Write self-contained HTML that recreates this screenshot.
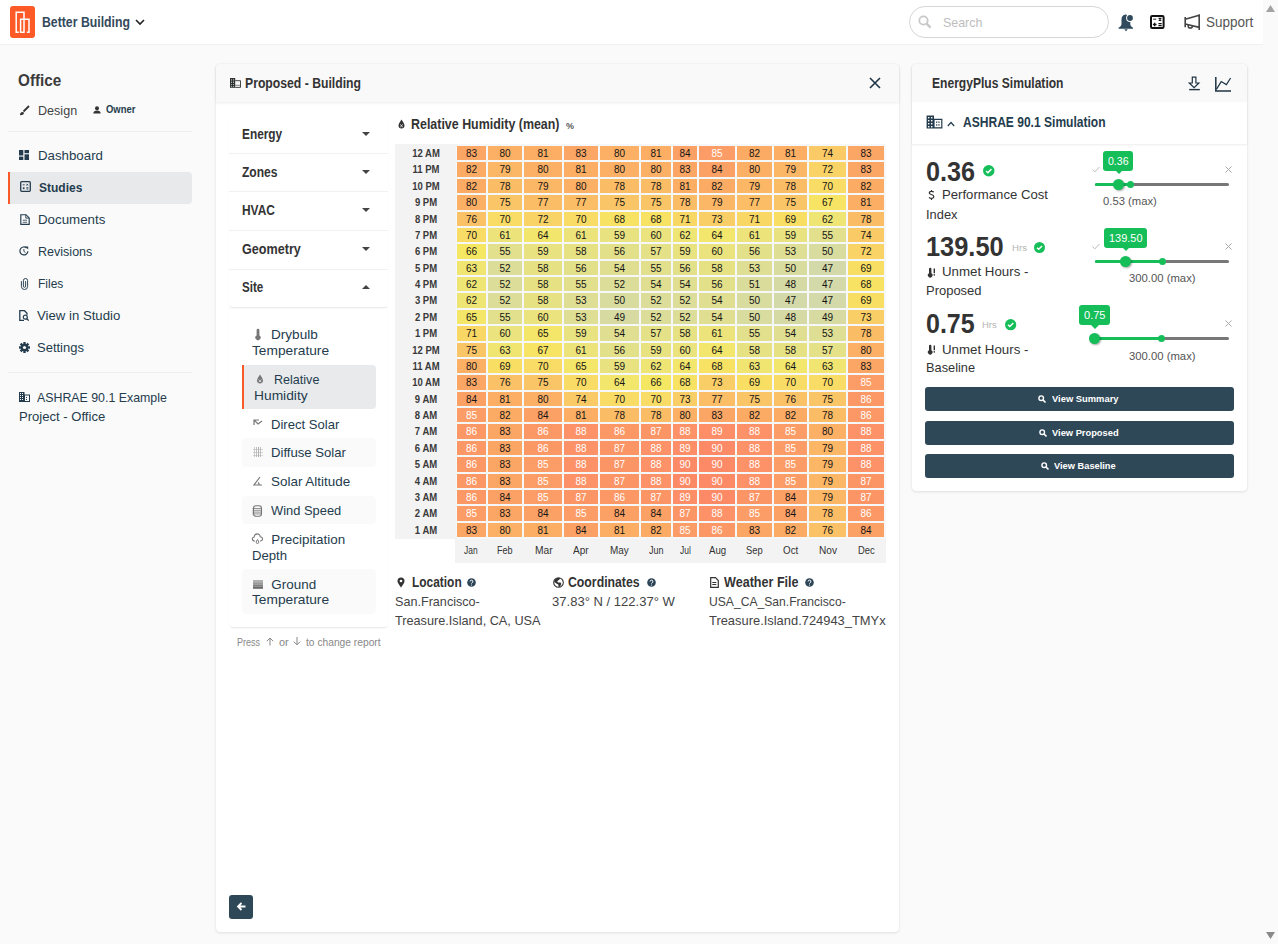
<!DOCTYPE html>
<html><head><meta charset="utf-8">
<style>
*{box-sizing:border-box;margin:0;padding:0}
html,body{width:1278px;height:944px;overflow:hidden}
body{font-family:"Liberation Sans",sans-serif;background:#fafafa;position:relative;color:#2d4252}
.t{position:absolute;white-space:nowrap;line-height:1}
.topbar{position:absolute;left:0;top:0;width:1263px;height:44px;background:#fff;box-shadow:0 1px 1px rgba(0,0,0,0.03)}
.scroll{position:absolute;left:1263px;top:0;width:15px;height:944px;background:#fafafa}
.sep{position:absolute;height:1px;background:#efefef}
.card{position:absolute;background:#fff;border-radius:4px;box-shadow:0 1px 3px rgba(0,0,0,0.10),0 0 1px rgba(0,0,0,0.10)}
.chead{position:absolute;left:0;top:0;right:0;height:38px;background:#f9f9f9;border-radius:4px 4px 0 0;box-shadow:0 1px 3px rgba(0,0,0,0.08)}
svg{position:absolute;overflow:visible}
.nav{font-size:13px;color:#2d4556}
.acc{position:absolute;background:#fff;border-radius:4px;box-shadow:0 2px 2px -1px rgba(0,0,0,0.10),0 0 1px rgba(0,0,0,0.05)}
.accsep{position:absolute;left:229px;width:159px;height:1px;background:#f1f1f1}
.hl{position:absolute;left:397px;width:58px;height:14.375px;line-height:15.4px;text-align:center;font-size:10px;font-weight:bold;color:#3a3a3a;white-space:nowrap;transform:scaleX(0.95)}
.hc{position:absolute;height:14.375px;line-height:15.2px;text-align:center;font-size:10px}
.hm{position:absolute;top:539px;height:24px;line-height:24px;text-align:center;font-size:10.5px;color:#333}
</style></head><body>

<div class="topbar"></div>
<div style="position:absolute;left:10px;top:6px;width:25px;height:32px;background:#fd5a27;border-radius:3px"></div>
<svg style="left:10px;top:6px" width="25" height="32" viewBox="0 0 25 32"><path d="M8.8 26.2H6.2V6.2H14V26.2H10.6V13.3H19V26.2H16.8" fill="none" stroke="#fff" stroke-width="1.5"/></svg>
<div class="t" style="left:42.00px;top:15.43px;font-size:14.49px;font-weight:bold;color:#34495b;transform:scaleX(0.8474);transform-origin:0 0;">Better Building</div>
<svg style="left:135px;top:19px" width="10" height="7" viewBox="0 0 10 7"><path d="M1 1l4 4 4-4" fill="none" stroke="#222" stroke-width="1.6"/></svg>
<div style="position:absolute;left:909px;top:6px;width:200px;height:32px;border:1px solid #d6d6d6;border-radius:16px;background:#fff"></div>
<svg style="left:918px;top:15px" width="14" height="14" viewBox="0 0 14 14"><circle cx="5.5" cy="5.5" r="4.2" fill="none" stroke="#c8c8c8" stroke-width="1.8"/><path d="M8.6 8.6l4 4" stroke="#c8c8c8" stroke-width="2.2"/></svg>
<div class="t" style="left:942.60px;top:16.31px;font-size:13.45px;color:#bdbdbd;transform:scaleX(0.9247);transform-origin:0 0;">Search</div>
<svg style="left:1117.5px;top:13.5px" width="16" height="18" viewBox="0 0 16 18"><path d="M8 .6C5.2 .6 3.5 2.8 3.5 5.8V10.2C3.5 11.8 2 12.9 .6 13.7V14.7H15V13.7C13.6 12.9 12.3 11.8 12.3 10.2V5.8C12.3 4.8 12 3.7 11.4 2.8" fill="#2e4a5c"/><circle cx="12" cy="4" r="3.9" fill="#fff"/><circle cx="12" cy="4" r="2.9" fill="#2e4a5c"/><path d="M6.2 15.3H9.8L8 17.2z" fill="#2e4a5c"/></svg>
<svg style="left:1150px;top:15px" width="15" height="14" viewBox="0 0 15 14"><rect x="1" y="1" width="12.6" height="12" rx="1.2" fill="none" stroke="#111" stroke-width="2"/><path d="M3.2 4.2h3" stroke="#555" stroke-width="1.3"/><path d="M8.7 2.9l2.6 2.6M11.3 2.9L8.7 5.5" stroke="#111" stroke-width="1.3"/><path d="M2.9 9.5h3.6M4.7 7.7v3.6M8.4 8.6h3.3M8.4 10.6h3.3" stroke="#111" stroke-width="1.3"/></svg>
<svg style="left:1184px;top:14px" width="17" height="17" viewBox="0 0 17 17"><path d="M1.2 3v10.2M1.2 5.3L15.2 1.2M1.2 10L15.2 13.4M15.2 .3v15.6" fill="none" stroke="#444" stroke-width="1.6"/><path d="M4.2 11v.9a2.1 2.1 0 0 0 4.2 0v-.1" fill="none" stroke="#444" stroke-width="1.5"/></svg>
<div class="t" style="left:1205.90px;top:15.43px;font-size:14.49px;color:#555;transform:scaleX(0.9302);transform-origin:0 0;">Support</div>
<div class="scroll"></div>
<svg style="left:1263px;top:0" width="15" height="15" viewBox="0 0 15 15"><path d="M3 12L7.5 5 12 12z" fill="#a3a3a3"/></svg>
<svg style="left:1263px;top:929px" width="15" height="15" viewBox="0 0 15 15"><path d="M3 3l4.5 7L12 3z" fill="#8a8a8a"/></svg>
<div class="t" style="left:17.70px;top:72.04px;font-size:17.08px;font-weight:bold;color:#3b3b3b;transform:scaleX(0.8945);transform-origin:0 0;">Office</div>
<svg style="left:19px;top:105px" width="11" height="11" viewBox="0 0 11 11"><path d="M10 1L4.5 6.5" stroke="#333" stroke-width="1.8"/><path d="M1 10.2c0-2 1-3.2 2.5-3.2 1 0 1.6.7 1.4 1.6C4.6 9.8 3 10.3 1 10.2z" fill="#333"/></svg>
<div class="t" style="left:37.50px;top:104.31px;font-size:13.45px;color:#444;transform:scaleX(0.9362);transform-origin:0 0;">Design</div>
<svg style="left:93px;top:106px" width="8" height="8" viewBox="0 0 8 8"><circle cx="4" cy="2.2" r="2" fill="#333"/><path d="M0.3 7.6c0-2 1.6-3 3.7-3s3.7 1 3.7 3z" fill="#333"/></svg>
<div class="t" style="left:105.60px;top:105.14px;font-size:10.35px;font-weight:bold;color:#243c4d;transform:scaleX(0.9128);transform-origin:0 0;">Owner</div>
<div class="sep" style="left:8px;top:131px;width:184px"></div>
<svg style="left:19px;top:150px" width="10" height="10" viewBox="0 0 10 10"><rect x="0" y="0" width="4.3" height="5.5" fill="#243c4d"/><rect x="5.5" y="0" width="4.5" height="3.2" fill="#243c4d"/><rect x="0" y="6.6" width="4.3" height="3.4" fill="#243c4d"/><rect x="5.5" y="4.3" width="4.5" height="5.7" fill="#243c4d"/></svg>
<div class="t" style="left:37.50px;top:149.01px;font-size:13.45px;color:#243c4d;transform:scaleX(0.9879);transform-origin:0 0;">Dashboard</div>
<div style="position:absolute;left:8px;top:172px;width:184px;height:32px;background:#e8e9eb;border-radius:0 4px 4px 0;border-left:2px solid #fa5a28"></div>
<svg style="left:20px;top:181px" width="11" height="11" viewBox="0 0 11 11"><rect x="0.7" y="0.7" width="9.6" height="9.6" rx="1" fill="none" stroke="#243c4d" stroke-width="1.3"/><path d="M2.7 3.8h2 M6.5 2.9l1.6 1.6 M8.1 2.9L6.5 4.5 M2.7 7.2h2 M3.7 6.2v2 M6.4 6.7h2 M6.4 8h2" stroke="#243c4d" stroke-width="0.9"/></svg>
<div class="t" style="left:38.80px;top:181.31px;font-size:13.45px;font-weight:bold;color:#243c4d;transform:scaleX(0.8933);transform-origin:0 0;">Studies</div>
<svg style="left:19.5px;top:213.5px" width="10" height="11" viewBox="0 0 10 11"><path d="M.8 .7h5.2l3.2 3.2v6.4H.8z" fill="none" stroke="#243c4d" stroke-width="1.15"/><path d="M5.8 .9v3.2h3.2" fill="none" stroke="#243c4d" stroke-width="0.9"/><path d="M2.8 6.2h4.2M2.8 8.3h4.2" stroke="#243c4d" stroke-width="0.8"/></svg>
<div class="t" style="left:37.70px;top:213.11px;font-size:13.45px;color:#243c4d;transform:scaleX(0.9907);transform-origin:0 0;">Documents</div>
<svg style="left:19px;top:246px" width="10" height="10" viewBox="0 0 10 10"><path d="M8.9 5.2A4 4 0 1 1 7.6 2" fill="none" stroke="#243c4d" stroke-width="1.2"/><path d="M6.2 .6h3v3z" fill="#243c4d"/><path d="M4.9 3v2.4l1.6 1.1" fill="none" stroke="#243c4d" stroke-width="0.9"/></svg>
<div class="t" style="left:37.70px;top:244.91px;font-size:13.45px;color:#243c4d;transform:scaleX(0.9330);transform-origin:0 0;">Revisions</div>
<svg style="left:21px;top:278px" width="7" height="11" viewBox="0 0 7 11"><path d="M4.6 3.2v5a1.1 1.1 0 0 1-2.2 0V2.6a2.1 2.1 0 0 1 4.2 0v5.8a3.1 3.1 0 0 1-6.2 0V3.2" fill="none" stroke="#243c4d" stroke-width="0.95"/></svg>
<div class="t" style="left:37.70px;top:277.01px;font-size:13.45px;color:#243c4d;transform:scaleX(0.8911);transform-origin:0 0;">Files</div>
<svg style="left:19px;top:310px" width="11" height="11" viewBox="0 0 11 11"><path d="M5 10.3H.8V.7h4.7l2.5 2.5v1.5" fill="none" stroke="#243c4d" stroke-width="1.3"/><circle cx="6.3" cy="7.2" r="2" fill="none" stroke="#243c4d" stroke-width="1.2"/><path d="M7.8 8.7l1.9 1.9" stroke="#243c4d" stroke-width="1.3"/></svg>
<div class="t" style="left:37.20px;top:309.01px;font-size:13.45px;color:#243c4d;transform:scaleX(0.9801);transform-origin:0 0;">View in Studio</div>
<svg style="left:19px;top:342px" width="11" height="11" viewBox="0 0 11 11"><g fill="#243c4d"><circle cx="5.5" cy="5.5" r="3.7"/><rect x="4.3" y="0" width="2.4" height="11"/><rect x="0" y="4.3" width="11" height="2.4"/><rect x="4.3" y="0" width="2.4" height="11" transform="rotate(45 5.5 5.5)"/><rect x="4.3" y="0" width="2.4" height="11" transform="rotate(-45 5.5 5.5)"/></g><circle cx="5.5" cy="5.5" r="1.6" fill="#fafafa"/></svg>
<div class="t" style="left:37.20px;top:341.11px;font-size:13.45px;color:#243c4d;transform:scaleX(0.9672);transform-origin:0 0;">Settings</div>
<div class="sep" style="left:8px;top:372px;width:184px"></div>
<svg style="left:19px;top:392px" width="11" height="10" viewBox="0 0 11 10"><path d="M0 0h5.5v2.5H11V10H0z" fill="#243c4d"/><g fill="#fafafa"><rect x="1" y="1" width="1" height="1"/><rect x="3" y="1" width="1" height="1"/><rect x="1" y="3" width="1" height="1"/><rect x="3" y="3" width="1" height="1"/><rect x="1" y="5" width="1" height="1"/><rect x="3" y="5" width="1" height="1"/><rect x="1" y="7" width="1" height="1"/><rect x="3" y="7" width="1" height="1"/><rect x="6" y="3.5" width="4" height="5.5"/></g><g fill="#243c4d"><rect x="7" y="5" width="1" height="1"/><rect x="7" y="7" width="1" height="1"/></g></svg>
<div class="t" style="left:37.20px;top:391.31px;font-size:13.45px;color:#243c4d;transform:scaleX(0.9194);transform-origin:0 0;">ASHRAE 90.1 Example</div>
<div class="t" style="left:18.50px;top:410.01px;font-size:13.45px;color:#243c4d;transform:scaleX(0.9729);transform-origin:0 0;">Project - Office</div>
<div class="card" style="left:216px;top:64px;width:683px;height:868px"><div class="chead"></div></div>
<svg style="left:229.8px;top:78px" width="11" height="10" viewBox="0 0 11 10"><rect x="0" y="0" width="5.2" height="9.8" fill="#333"/><g fill="#9fb8b0"><rect x="1" y="1.2" width="1" height="1.4"/><rect x="3" y="1.2" width="1" height="1.4"/><rect x="1" y="3.6" width="1" height="1.4"/><rect x="3" y="3.6" width="1" height="1.4"/><rect x="1" y="6" width="1" height="1"/><rect x="3" y="6" width="1" height="1"/><rect x="1" y="8" width="1" height="1"/><rect x="3" y="8" width="1" height="1"/></g><path d="M5.2 2.7H10.5V9.4H5.2" fill="none" stroke="#333" stroke-width="0.9"/><path d="M5.2 7.3h5" stroke="#333" stroke-width="0.6"/></svg>
<div class="t" style="left:245.00px;top:76.87px;font-size:13.97px;font-weight:bold;color:#333;transform:scaleX(0.8741);transform-origin:0 0;">Proposed - Building</div>
<svg style="left:869px;top:77px" width="12" height="12" viewBox="0 0 12 12"><path d="M1 1l10 10M11 1L1 11" stroke="#1f3445" stroke-width="1.6"/></svg>
<div class="acc" style="left:229px;top:307px;width:159px;height:320px"></div>
<div class="acc" style="left:229px;top:115px;width:159px;height:192px"></div>
<div class="t" style="left:242.00px;top:127.87px;font-size:13.97px;font-weight:bold;color:#333;transform:scaleX(0.8488);transform-origin:0 0;">Energy</div>
<svg style="left:362px;top:132px" width="8" height="4" viewBox="0 0 8 4"><path d="M0 0L4 4 8 0z" fill="#444"/></svg>
<div class="accsep" style="top:153px"></div>
<div class="t" style="left:242.00px;top:165.87px;font-size:13.97px;font-weight:bold;color:#333;transform:scaleX(0.8629);transform-origin:0 0;">Zones</div>
<svg style="left:362px;top:170px" width="8" height="4" viewBox="0 0 8 4"><path d="M0 0L4 4 8 0z" fill="#444"/></svg>
<div class="accsep" style="top:191px"></div>
<div class="t" style="left:242.00px;top:204.17px;font-size:13.97px;font-weight:bold;color:#333;transform:scaleX(0.8536);transform-origin:0 0;">HVAC</div>
<svg style="left:362px;top:208.3px" width="8" height="4" viewBox="0 0 8 4"><path d="M0 0L4 4 8 0z" fill="#444"/></svg>
<div class="accsep" style="top:230px"></div>
<div class="t" style="left:242.00px;top:242.57px;font-size:13.97px;font-weight:bold;color:#333;transform:scaleX(0.9017);transform-origin:0 0;">Geometry</div>
<svg style="left:362px;top:246.7px" width="8" height="4" viewBox="0 0 8 4"><path d="M0 0L4 4 8 0z" fill="#444"/></svg>
<div class="accsep" style="top:269px"></div>
<div class="t" style="left:242.00px;top:280.87px;font-size:13.97px;font-weight:bold;color:#333;transform:scaleX(0.8313);transform-origin:0 0;">Site</div>
<svg style="left:362px;top:285px" width="8" height="4" viewBox="0 0 8 4"><path d="M0 4L4 0 8 4z" fill="#444"/></svg>
<div style="position:absolute;left:242px;top:365px;width:134px;height:44px;background:#e9eaec;border-left:2px solid #fa5a28;border-radius:0 4px 4px 0;"></div>
<div style="position:absolute;left:242px;top:438px;width:134px;height:29px;background:#fafafa;border-radius:4px;"></div>
<div style="position:absolute;left:242px;top:496px;width:134px;height:28px;background:#fafafa;border-radius:4px;"></div>
<div style="position:absolute;left:242px;top:569px;width:134px;height:45px;background:#fafafa;border-radius:4px;"></div>
<div class="t" style="left:271.30px;top:328.21px;font-size:13.45px;color:#243c4d;transform:scaleX(1.0097);transform-origin:0 0;">Drybulb</div>
<div class="t" style="left:252.00px;top:344.01px;font-size:13.45px;color:#243c4d;transform:scaleX(1.0211);transform-origin:0 0;">Temperature</div>
<div class="t" style="left:273.80px;top:373.01px;font-size:13.45px;color:#243c4d;transform:scaleX(0.9343);transform-origin:0 0;">Relative</div>
<div class="t" style="left:254.10px;top:388.81px;font-size:13.45px;color:#243c4d;transform:scaleX(1.0264);transform-origin:0 0;">Humidity</div>
<div class="t" style="left:271.30px;top:417.71px;font-size:13.45px;color:#243c4d;transform:scaleX(0.9735);transform-origin:0 0;">Direct Solar</div>
<div class="t" style="left:271.30px;top:445.71px;font-size:13.45px;color:#243c4d;transform:scaleX(0.9771);transform-origin:0 0;">Diffuse Solar</div>
<div class="t" style="left:271.00px;top:475.11px;font-size:13.45px;color:#243c4d;">Solar Altitude</div>
<div class="t" style="left:271.00px;top:503.61px;font-size:13.45px;color:#243c4d;transform:scaleX(0.9594);transform-origin:0 0;">Wind Speed</div>
<div class="t" style="left:271.30px;top:533.31px;font-size:13.45px;color:#243c4d;">Precipitation</div>
<div class="t" style="left:252.00px;top:549.31px;font-size:13.45px;color:#243c4d;transform:scaleX(0.9781);transform-origin:0 0;">Depth</div>
<div class="t" style="left:271.30px;top:577.81px;font-size:13.45px;color:#243c4d;">Ground</div>
<div class="t" style="left:252.00px;top:592.91px;font-size:13.45px;color:#243c4d;transform:scaleX(1.0211);transform-origin:0 0;">Temperature</div>
<svg style="left:254px;top:329px" width="8" height="11" viewBox="0 0 8 11"><path d="M2.6 1.2a1.4 1.4 0 0 1 2.8 0v5.2a2.6 2.6 0 1 1-2.8 0z" fill="#777"/></svg>
<svg style="left:256px;top:374px" width="8" height="10" viewBox="0 0 8 10"><path d="M4 0.5C2.5 3 1 4.8 1 6.6a3 3 0 0 0 6 0C7 4.8 5.5 3 4 .5z" fill="#777"/><path d="M2.6 5.5l2.8 2.8M5.4 5.5L2.6 8.3" stroke="#e9eaec" stroke-width="0.8"/></svg>
<svg style="left:253px;top:419px" width="10" height="8" viewBox="0 0 10 8"><path d="M1 6V1h5M1 1l4 4 4-3" fill="none" stroke="#777" stroke-width="1.2"/></svg>
<svg style="left:253px;top:447px" width="10" height="10" viewBox="0 0 10 10"><g fill="#777" opacity="0.55"><rect x="1" y="0" width="1" height="10" opacity=".6"/><rect x="3" y="0" width="1" height="10" opacity=".8"/><rect x="5" y="0" width="1" height="10"/><rect x="7" y="0" width="1" height="10" opacity=".8"/><rect x="0" y="2" width="10" height="1" opacity=".5"/><rect x="0" y="5" width="10" height="1" opacity=".5"/><rect x="0" y="8" width="10" height="1" opacity=".5"/></g></svg>
<svg style="left:253px;top:476px" width="10" height="10" viewBox="0 0 10 10"><path d="M7 1L1 9h8M5 6.5a2.5 2.5 0 0 1 1 2.5" fill="none" stroke="#777" stroke-width="1.2"/></svg>
<svg style="left:252px;top:504.5px" width="11" height="12" viewBox="0 0 11 12"><rect x="1.5" y="0.8" width="8" height="10.4" rx="2.5" fill="none" stroke="#777" stroke-width="1.1"/><path d="M0.5 3.5h9M0.5 5.3h9M0.5 7.1h9M0.5 8.9h9" stroke="#777" stroke-width="0.8"/></svg>
<svg style="left:252px;top:534px" width="11" height="11" viewBox="0 0 11 11"><path d="M3 7H2.5a2 2 0 0 1-.3-4 3 3 0 0 1 6-.3 2 2 0 0 1 .3 4.3H8" fill="none" stroke="#777" stroke-width="1.1"/><path d="M5.5 5.5c-.8 1.3-1.3 2-1.3 2.7a1.3 1.3 0 0 0 2.6 0c0-.7-.5-1.4-1.3-2.7z" fill="none" stroke="#777" stroke-width="1"/></svg>
<svg style="left:253px;top:580px" width="10" height="9" viewBox="0 0 10 9"><rect x="0" y="0" width="10" height="2.2" fill="#b0b0b0"/><rect x="0" y="2.2" width="10" height="2.2" fill="#999"/><rect x="0" y="4.4" width="10" height="2.2" fill="#808080"/><rect x="0" y="6.6" width="10" height="2.2" fill="#6a6a6a"/></svg>
<div class="t" style="left:236.90px;top:636.50px;font-size:10.87px;color:#888;transform:scaleX(0.8314);transform-origin:0 0;">Press</div>
<div class="t" style="left:278.50px;top:636.50px;font-size:10.87px;color:#888;transform:scaleX(1.0141);transform-origin:0 0;">or</div>
<div class="t" style="left:305.90px;top:636.50px;font-size:10.87px;color:#888;transform:scaleX(0.9436);transform-origin:0 0;">to change report</div>
<svg style="left:265.5px;top:637px" width="8" height="9" viewBox="0 0 8 9"><path d="M4 8.5V1M.8 4.2L4 1l3.2 3.2" fill="none" stroke="#888" stroke-width="1"/></svg>
<svg style="left:293px;top:637px" width="8" height="9" viewBox="0 0 8 9"><path d="M4 0V7.8M.8 4.6L4 7.8l3.2-3.2" fill="none" stroke="#888" stroke-width="1"/></svg>
<svg style="left:398px;top:119px" width="7" height="10" viewBox="0 0 7 10"><path d="M3.5 0.5C2 3 .5 4.8.5 6.6a3 3 0 0 0 6 0C6.5 4.8 5 3 3.5.5z" fill="#333"/><path d="M2.2 5.5l2.6 2.6M4.8 5.5L2.2 8.1" stroke="#fff" stroke-width="0.8"/></svg>
<div class="t" style="left:411.40px;top:117.67px;font-size:13.97px;font-weight:bold;color:#333;transform:scaleX(0.8898);transform-origin:0 0;">Relative Humidity (mean)</div>
<div class="t" style="left:566.00px;top:121.18px;font-size:9.83px;font-weight:bold;color:#555;transform:scaleX(0.9155);transform-origin:0 0;">%</div>
<div style="position:absolute;left:395px;top:144px;width:491px;height:395px;background:#f6f7f9"></div>
<div style="position:absolute;left:395px;top:144px;width:61px;height:395px;background:#f3f3f3"></div>
<div style="position:absolute;left:455px;top:539px;width:431px;height:24px;background:#f3f3f3"></div>
<div class="hl" style="top:146.000px">12 AM</div>
<div class="hc" style="left:457px;top:146.000px;width:29px;background:#fba664;color:#151515">83</div>
<div class="hc" style="left:488px;top:146.000px;width:34px;background:#fbb065;color:#151515">80</div>
<div class="hc" style="left:524px;top:146.000px;width:38px;background:#fbae64;color:#151515">81</div>
<div class="hc" style="left:564px;top:146.000px;width:34px;background:#fba664;color:#151515">83</div>
<div class="hc" style="left:600px;top:146.000px;width:39px;background:#fbb065;color:#151515">80</div>
<div class="hc" style="left:641px;top:146.000px;width:30px;background:#fbae64;color:#151515">81</div>
<div class="hc" style="left:673px;top:146.000px;width:24px;background:#fca165;color:#151515">84</div>
<div class="hc" style="left:699px;top:146.000px;width:36px;background:#fc9c66;color:#fff">85</div>
<div class="hc" style="left:737px;top:146.000px;width:35px;background:#fbab63;color:#151515">82</div>
<div class="hc" style="left:774px;top:146.000px;width:33px;background:#fbae64;color:#151515">81</div>
<div class="hc" style="left:809px;top:146.000px;width:37px;background:#faca66;color:#151515">74</div>
<div class="hc" style="left:848px;top:146.000px;width:36px;background:#fba664;color:#151515">83</div>
<div class="hl" style="top:162.375px">11 PM</div>
<div class="hc" style="left:457px;top:162.375px;width:29px;background:#fbab63;color:#151515">82</div>
<div class="hc" style="left:488px;top:162.375px;width:34px;background:#fbb666;color:#151515">79</div>
<div class="hc" style="left:524px;top:162.375px;width:38px;background:#fbb065;color:#151515">80</div>
<div class="hc" style="left:564px;top:162.375px;width:34px;background:#fbae64;color:#151515">81</div>
<div class="hc" style="left:600px;top:162.375px;width:39px;background:#fbb065;color:#151515">80</div>
<div class="hc" style="left:641px;top:162.375px;width:30px;background:#fbb065;color:#151515">80</div>
<div class="hc" style="left:673px;top:162.375px;width:24px;background:#fba664;color:#151515">83</div>
<div class="hc" style="left:699px;top:162.375px;width:36px;background:#fca165;color:#151515">84</div>
<div class="hc" style="left:737px;top:162.375px;width:35px;background:#fbb065;color:#151515">80</div>
<div class="hc" style="left:774px;top:162.375px;width:33px;background:#fbb666;color:#151515">79</div>
<div class="hc" style="left:809px;top:162.375px;width:37px;background:#f9d365;color:#151515">72</div>
<div class="hc" style="left:848px;top:162.375px;width:36px;background:#fba664;color:#151515">83</div>
<div class="hl" style="top:178.750px">10 PM</div>
<div class="hc" style="left:457px;top:178.750px;width:29px;background:#fbab63;color:#151515">82</div>
<div class="hc" style="left:488px;top:178.750px;width:34px;background:#fbbc66;color:#151515">78</div>
<div class="hc" style="left:524px;top:178.750px;width:38px;background:#fbb666;color:#151515">79</div>
<div class="hc" style="left:564px;top:178.750px;width:34px;background:#fbb065;color:#151515">80</div>
<div class="hc" style="left:600px;top:178.750px;width:39px;background:#fbbc66;color:#151515">78</div>
<div class="hc" style="left:641px;top:178.750px;width:30px;background:#fbbc66;color:#151515">78</div>
<div class="hc" style="left:673px;top:178.750px;width:24px;background:#fbae64;color:#151515">81</div>
<div class="hc" style="left:699px;top:178.750px;width:36px;background:#fbab63;color:#151515">82</div>
<div class="hc" style="left:737px;top:178.750px;width:35px;background:#fbb666;color:#151515">79</div>
<div class="hc" style="left:774px;top:178.750px;width:33px;background:#fbbc66;color:#151515">78</div>
<div class="hc" style="left:809px;top:178.750px;width:37px;background:#f9dc65;color:#151515">70</div>
<div class="hc" style="left:848px;top:178.750px;width:36px;background:#fbab63;color:#151515">82</div>
<div class="hl" style="top:195.125px">9 PM</div>
<div class="hc" style="left:457px;top:195.125px;width:29px;background:#fbb065;color:#151515">80</div>
<div class="hc" style="left:488px;top:195.125px;width:34px;background:#fac566;color:#151515">75</div>
<div class="hc" style="left:524px;top:195.125px;width:38px;background:#fbbe66;color:#151515">77</div>
<div class="hc" style="left:564px;top:195.125px;width:34px;background:#fbbe66;color:#151515">77</div>
<div class="hc" style="left:600px;top:195.125px;width:39px;background:#fac566;color:#151515">75</div>
<div class="hc" style="left:641px;top:195.125px;width:30px;background:#fac566;color:#151515">75</div>
<div class="hc" style="left:673px;top:195.125px;width:24px;background:#fbbc66;color:#151515">78</div>
<div class="hc" style="left:699px;top:195.125px;width:36px;background:#fbb666;color:#151515">79</div>
<div class="hc" style="left:737px;top:195.125px;width:35px;background:#fbbe66;color:#151515">77</div>
<div class="hc" style="left:774px;top:195.125px;width:33px;background:#fac566;color:#151515">75</div>
<div class="hc" style="left:809px;top:195.125px;width:37px;background:#f7e464;color:#151515">67</div>
<div class="hc" style="left:848px;top:195.125px;width:36px;background:#fbae64;color:#151515">81</div>
<div class="hl" style="top:211.500px">8 PM</div>
<div class="hc" style="left:457px;top:211.500px;width:29px;background:#fbc166;color:#151515">76</div>
<div class="hc" style="left:488px;top:211.500px;width:34px;background:#f9dc65;color:#151515">70</div>
<div class="hc" style="left:524px;top:211.500px;width:38px;background:#f9d365;color:#151515">72</div>
<div class="hc" style="left:564px;top:211.500px;width:34px;background:#f9dc65;color:#151515">70</div>
<div class="hc" style="left:600px;top:211.500px;width:39px;background:#f8e264;color:#151515">68</div>
<div class="hc" style="left:641px;top:211.500px;width:30px;background:#f8e264;color:#151515">68</div>
<div class="hc" style="left:673px;top:211.500px;width:24px;background:#f9d765;color:#151515">71</div>
<div class="hc" style="left:699px;top:211.500px;width:36px;background:#face66;color:#151515">73</div>
<div class="hc" style="left:737px;top:211.500px;width:35px;background:#f9d765;color:#151515">71</div>
<div class="hc" style="left:774px;top:211.500px;width:33px;background:#f8df64;color:#151515">69</div>
<div class="hc" style="left:809px;top:211.500px;width:37px;background:#eee575;color:#151515">62</div>
<div class="hc" style="left:848px;top:211.500px;width:36px;background:#fbbc66;color:#151515">78</div>
<div class="hl" style="top:227.875px">7 PM</div>
<div class="hc" style="left:457px;top:227.875px;width:29px;background:#f9dc65;color:#151515">70</div>
<div class="hc" style="left:488px;top:227.875px;width:34px;background:#ece47a;color:#151515">61</div>
<div class="hc" style="left:524px;top:227.875px;width:38px;background:#f2e66c;color:#151515">64</div>
<div class="hc" style="left:564px;top:227.875px;width:34px;background:#ece47a;color:#151515">61</div>
<div class="hc" style="left:600px;top:227.875px;width:39px;background:#e8e281;color:#151515">59</div>
<div class="hc" style="left:641px;top:227.875px;width:30px;background:#eae37e;color:#151515">60</div>
<div class="hc" style="left:673px;top:227.875px;width:24px;background:#eee575;color:#151515">62</div>
<div class="hc" style="left:699px;top:227.875px;width:36px;background:#f2e66c;color:#151515">64</div>
<div class="hc" style="left:737px;top:227.875px;width:35px;background:#ece47a;color:#151515">61</div>
<div class="hc" style="left:774px;top:227.875px;width:33px;background:#e8e281;color:#151515">59</div>
<div class="hc" style="left:809px;top:227.875px;width:37px;background:#e2df8d;color:#151515">55</div>
<div class="hc" style="left:848px;top:227.875px;width:36px;background:#faca66;color:#151515">74</div>
<div class="hl" style="top:244.250px">6 PM</div>
<div class="hc" style="left:457px;top:244.250px;width:29px;background:#f6e763;color:#151515">66</div>
<div class="hc" style="left:488px;top:244.250px;width:34px;background:#e2df8d;color:#151515">55</div>
<div class="hc" style="left:524px;top:244.250px;width:38px;background:#e8e281;color:#151515">59</div>
<div class="hc" style="left:564px;top:244.250px;width:34px;background:#e6e284;color:#151515">58</div>
<div class="hc" style="left:600px;top:244.250px;width:39px;background:#e3e08a;color:#151515">56</div>
<div class="hc" style="left:641px;top:244.250px;width:30px;background:#e4e188;color:#151515">57</div>
<div class="hc" style="left:673px;top:244.250px;width:24px;background:#e8e281;color:#151515">59</div>
<div class="hc" style="left:699px;top:244.250px;width:36px;background:#eae37e;color:#151515">60</div>
<div class="hc" style="left:737px;top:244.250px;width:35px;background:#e3e08a;color:#151515">56</div>
<div class="hc" style="left:774px;top:244.250px;width:33px;background:#dede94;color:#151515">53</div>
<div class="hc" style="left:809px;top:244.250px;width:37px;background:#d9dc9f;color:#151515">50</div>
<div class="hc" style="left:848px;top:244.250px;width:36px;background:#f9d365;color:#151515">72</div>
<div class="hl" style="top:260.625px">5 PM</div>
<div class="hc" style="left:457px;top:260.625px;width:29px;background:#f0e571;color:#151515">63</div>
<div class="hc" style="left:488px;top:260.625px;width:34px;background:#dcdd98;color:#151515">52</div>
<div class="hc" style="left:524px;top:260.625px;width:38px;background:#e6e284;color:#151515">58</div>
<div class="hc" style="left:564px;top:260.625px;width:34px;background:#e3e08a;color:#151515">56</div>
<div class="hc" style="left:600px;top:260.625px;width:39px;background:#e0de91;color:#151515">54</div>
<div class="hc" style="left:641px;top:260.625px;width:30px;background:#e2df8d;color:#151515">55</div>
<div class="hc" style="left:673px;top:260.625px;width:24px;background:#e3e08a;color:#151515">56</div>
<div class="hc" style="left:699px;top:260.625px;width:36px;background:#e6e284;color:#151515">58</div>
<div class="hc" style="left:737px;top:260.625px;width:35px;background:#dede94;color:#151515">53</div>
<div class="hc" style="left:774px;top:260.625px;width:33px;background:#d9dc9f;color:#151515">50</div>
<div class="hc" style="left:809px;top:260.625px;width:37px;background:#d3d9a8;color:#151515">47</div>
<div class="hc" style="left:848px;top:260.625px;width:36px;background:#f8df64;color:#151515">69</div>
<div class="hl" style="top:277.000px">4 PM</div>
<div class="hc" style="left:457px;top:277.000px;width:29px;background:#eee575;color:#151515">62</div>
<div class="hc" style="left:488px;top:277.000px;width:34px;background:#dcdd98;color:#151515">52</div>
<div class="hc" style="left:524px;top:277.000px;width:38px;background:#e6e284;color:#151515">58</div>
<div class="hc" style="left:564px;top:277.000px;width:34px;background:#e2df8d;color:#151515">55</div>
<div class="hc" style="left:600px;top:277.000px;width:39px;background:#dcdd98;color:#151515">52</div>
<div class="hc" style="left:641px;top:277.000px;width:30px;background:#e0de91;color:#151515">54</div>
<div class="hc" style="left:673px;top:277.000px;width:24px;background:#e0de91;color:#151515">54</div>
<div class="hc" style="left:699px;top:277.000px;width:36px;background:#e3e08a;color:#151515">56</div>
<div class="hc" style="left:737px;top:277.000px;width:35px;background:#dadc9b;color:#151515">51</div>
<div class="hc" style="left:774px;top:277.000px;width:33px;background:#d5daa5;color:#151515">48</div>
<div class="hc" style="left:809px;top:277.000px;width:37px;background:#d3d9a8;color:#151515">47</div>
<div class="hc" style="left:848px;top:277.000px;width:36px;background:#f8e264;color:#151515">68</div>
<div class="hl" style="top:293.375px">3 PM</div>
<div class="hc" style="left:457px;top:293.375px;width:29px;background:#eee575;color:#151515">62</div>
<div class="hc" style="left:488px;top:293.375px;width:34px;background:#dcdd98;color:#151515">52</div>
<div class="hc" style="left:524px;top:293.375px;width:38px;background:#e6e284;color:#151515">58</div>
<div class="hc" style="left:564px;top:293.375px;width:34px;background:#dede94;color:#151515">53</div>
<div class="hc" style="left:600px;top:293.375px;width:39px;background:#d9dc9f;color:#151515">50</div>
<div class="hc" style="left:641px;top:293.375px;width:30px;background:#dcdd98;color:#151515">52</div>
<div class="hc" style="left:673px;top:293.375px;width:24px;background:#dcdd98;color:#151515">52</div>
<div class="hc" style="left:699px;top:293.375px;width:36px;background:#e0de91;color:#151515">54</div>
<div class="hc" style="left:737px;top:293.375px;width:35px;background:#d9dc9f;color:#151515">50</div>
<div class="hc" style="left:774px;top:293.375px;width:33px;background:#d3d9a8;color:#151515">47</div>
<div class="hc" style="left:809px;top:293.375px;width:37px;background:#d3d9a8;color:#151515">47</div>
<div class="hc" style="left:848px;top:293.375px;width:36px;background:#f8df64;color:#151515">69</div>
<div class="hl" style="top:309.750px">2 PM</div>
<div class="hc" style="left:457px;top:309.750px;width:29px;background:#f4e668;color:#151515">65</div>
<div class="hc" style="left:488px;top:309.750px;width:34px;background:#e2df8d;color:#151515">55</div>
<div class="hc" style="left:524px;top:309.750px;width:38px;background:#eae37e;color:#151515">60</div>
<div class="hc" style="left:564px;top:309.750px;width:34px;background:#dede94;color:#151515">53</div>
<div class="hc" style="left:600px;top:309.750px;width:39px;background:#d7dba2;color:#151515">49</div>
<div class="hc" style="left:641px;top:309.750px;width:30px;background:#dcdd98;color:#151515">52</div>
<div class="hc" style="left:673px;top:309.750px;width:24px;background:#dcdd98;color:#151515">52</div>
<div class="hc" style="left:699px;top:309.750px;width:36px;background:#e0de91;color:#151515">54</div>
<div class="hc" style="left:737px;top:309.750px;width:35px;background:#d9dc9f;color:#151515">50</div>
<div class="hc" style="left:774px;top:309.750px;width:33px;background:#d5daa5;color:#151515">48</div>
<div class="hc" style="left:809px;top:309.750px;width:37px;background:#d7dba2;color:#151515">49</div>
<div class="hc" style="left:848px;top:309.750px;width:36px;background:#face66;color:#151515">73</div>
<div class="hl" style="top:326.125px">1 PM</div>
<div class="hc" style="left:457px;top:326.125px;width:29px;background:#f9d765;color:#151515">71</div>
<div class="hc" style="left:488px;top:326.125px;width:34px;background:#eae37e;color:#151515">60</div>
<div class="hc" style="left:524px;top:326.125px;width:38px;background:#f4e668;color:#151515">65</div>
<div class="hc" style="left:564px;top:326.125px;width:34px;background:#e8e281;color:#151515">59</div>
<div class="hc" style="left:600px;top:326.125px;width:39px;background:#e0de91;color:#151515">54</div>
<div class="hc" style="left:641px;top:326.125px;width:30px;background:#e4e188;color:#151515">57</div>
<div class="hc" style="left:673px;top:326.125px;width:24px;background:#e6e284;color:#151515">58</div>
<div class="hc" style="left:699px;top:326.125px;width:36px;background:#ece47a;color:#151515">61</div>
<div class="hc" style="left:737px;top:326.125px;width:35px;background:#e2df8d;color:#151515">55</div>
<div class="hc" style="left:774px;top:326.125px;width:33px;background:#e0de91;color:#151515">54</div>
<div class="hc" style="left:809px;top:326.125px;width:37px;background:#dede94;color:#151515">53</div>
<div class="hc" style="left:848px;top:326.125px;width:36px;background:#fbbc66;color:#151515">78</div>
<div class="hl" style="top:342.500px">12 PM</div>
<div class="hc" style="left:457px;top:342.500px;width:29px;background:#fac566;color:#151515">75</div>
<div class="hc" style="left:488px;top:342.500px;width:34px;background:#f0e571;color:#151515">63</div>
<div class="hc" style="left:524px;top:342.500px;width:38px;background:#f7e464;color:#151515">67</div>
<div class="hc" style="left:564px;top:342.500px;width:34px;background:#ece47a;color:#151515">61</div>
<div class="hc" style="left:600px;top:342.500px;width:39px;background:#e3e08a;color:#151515">56</div>
<div class="hc" style="left:641px;top:342.500px;width:30px;background:#e8e281;color:#151515">59</div>
<div class="hc" style="left:673px;top:342.500px;width:24px;background:#eae37e;color:#151515">60</div>
<div class="hc" style="left:699px;top:342.500px;width:36px;background:#f2e66c;color:#151515">64</div>
<div class="hc" style="left:737px;top:342.500px;width:35px;background:#e6e284;color:#151515">58</div>
<div class="hc" style="left:774px;top:342.500px;width:33px;background:#e6e284;color:#151515">58</div>
<div class="hc" style="left:809px;top:342.500px;width:37px;background:#e4e188;color:#151515">57</div>
<div class="hc" style="left:848px;top:342.500px;width:36px;background:#fbb065;color:#151515">80</div>
<div class="hl" style="top:358.875px">11 AM</div>
<div class="hc" style="left:457px;top:358.875px;width:29px;background:#fbb065;color:#151515">80</div>
<div class="hc" style="left:488px;top:358.875px;width:34px;background:#f8df64;color:#151515">69</div>
<div class="hc" style="left:524px;top:358.875px;width:38px;background:#f9dc65;color:#151515">70</div>
<div class="hc" style="left:564px;top:358.875px;width:34px;background:#f4e668;color:#151515">65</div>
<div class="hc" style="left:600px;top:358.875px;width:39px;background:#e8e281;color:#151515">59</div>
<div class="hc" style="left:641px;top:358.875px;width:30px;background:#eee575;color:#151515">62</div>
<div class="hc" style="left:673px;top:358.875px;width:24px;background:#f2e66c;color:#151515">64</div>
<div class="hc" style="left:699px;top:358.875px;width:36px;background:#f8e264;color:#151515">68</div>
<div class="hc" style="left:737px;top:358.875px;width:35px;background:#f0e571;color:#151515">63</div>
<div class="hc" style="left:774px;top:358.875px;width:33px;background:#f2e66c;color:#151515">64</div>
<div class="hc" style="left:809px;top:358.875px;width:37px;background:#f0e571;color:#151515">63</div>
<div class="hc" style="left:848px;top:358.875px;width:36px;background:#fba664;color:#151515">83</div>
<div class="hl" style="top:375.250px">10 AM</div>
<div class="hc" style="left:457px;top:375.250px;width:29px;background:#fba664;color:#151515">83</div>
<div class="hc" style="left:488px;top:375.250px;width:34px;background:#fbc166;color:#151515">76</div>
<div class="hc" style="left:524px;top:375.250px;width:38px;background:#fac566;color:#151515">75</div>
<div class="hc" style="left:564px;top:375.250px;width:34px;background:#f9dc65;color:#151515">70</div>
<div class="hc" style="left:600px;top:375.250px;width:39px;background:#f2e66c;color:#151515">64</div>
<div class="hc" style="left:641px;top:375.250px;width:30px;background:#f6e763;color:#151515">66</div>
<div class="hc" style="left:673px;top:375.250px;width:24px;background:#f8e264;color:#151515">68</div>
<div class="hc" style="left:699px;top:375.250px;width:36px;background:#face66;color:#151515">73</div>
<div class="hc" style="left:737px;top:375.250px;width:35px;background:#f8df64;color:#151515">69</div>
<div class="hc" style="left:774px;top:375.250px;width:33px;background:#f9dc65;color:#151515">70</div>
<div class="hc" style="left:809px;top:375.250px;width:37px;background:#f9dc65;color:#151515">70</div>
<div class="hc" style="left:848px;top:375.250px;width:36px;background:#fc9c66;color:#fff">85</div>
<div class="hl" style="top:391.625px">9 AM</div>
<div class="hc" style="left:457px;top:391.625px;width:29px;background:#fca165;color:#151515">84</div>
<div class="hc" style="left:488px;top:391.625px;width:34px;background:#fbae64;color:#151515">81</div>
<div class="hc" style="left:524px;top:391.625px;width:38px;background:#fbb065;color:#151515">80</div>
<div class="hc" style="left:564px;top:391.625px;width:34px;background:#faca66;color:#151515">74</div>
<div class="hc" style="left:600px;top:391.625px;width:39px;background:#f9dc65;color:#151515">70</div>
<div class="hc" style="left:641px;top:391.625px;width:30px;background:#f9dc65;color:#151515">70</div>
<div class="hc" style="left:673px;top:391.625px;width:24px;background:#face66;color:#151515">73</div>
<div class="hc" style="left:699px;top:391.625px;width:36px;background:#fbbe66;color:#151515">77</div>
<div class="hc" style="left:737px;top:391.625px;width:35px;background:#fac566;color:#151515">75</div>
<div class="hc" style="left:774px;top:391.625px;width:33px;background:#fbc166;color:#151515">76</div>
<div class="hc" style="left:809px;top:391.625px;width:37px;background:#fac566;color:#151515">75</div>
<div class="hc" style="left:848px;top:391.625px;width:36px;background:#fc9866;color:#fff">86</div>
<div class="hl" style="top:408.000px">8 AM</div>
<div class="hc" style="left:457px;top:408.000px;width:29px;background:#fc9c66;color:#fff">85</div>
<div class="hc" style="left:488px;top:408.000px;width:34px;background:#fbab63;color:#151515">82</div>
<div class="hc" style="left:524px;top:408.000px;width:38px;background:#fca165;color:#151515">84</div>
<div class="hc" style="left:564px;top:408.000px;width:34px;background:#fbae64;color:#151515">81</div>
<div class="hc" style="left:600px;top:408.000px;width:39px;background:#fbbc66;color:#151515">78</div>
<div class="hc" style="left:641px;top:408.000px;width:30px;background:#fbbc66;color:#151515">78</div>
<div class="hc" style="left:673px;top:408.000px;width:24px;background:#fbb065;color:#151515">80</div>
<div class="hc" style="left:699px;top:408.000px;width:36px;background:#fba664;color:#151515">83</div>
<div class="hc" style="left:737px;top:408.000px;width:35px;background:#fbab63;color:#151515">82</div>
<div class="hc" style="left:774px;top:408.000px;width:33px;background:#fbab63;color:#151515">82</div>
<div class="hc" style="left:809px;top:408.000px;width:37px;background:#fbbc66;color:#151515">78</div>
<div class="hc" style="left:848px;top:408.000px;width:36px;background:#fc9866;color:#fff">86</div>
<div class="hl" style="top:424.375px">7 AM</div>
<div class="hc" style="left:457px;top:424.375px;width:29px;background:#fc9866;color:#fff">86</div>
<div class="hc" style="left:488px;top:424.375px;width:34px;background:#fba664;color:#151515">83</div>
<div class="hc" style="left:524px;top:424.375px;width:38px;background:#fc9866;color:#fff">86</div>
<div class="hc" style="left:564px;top:424.375px;width:34px;background:#fd9167;color:#fff">88</div>
<div class="hc" style="left:600px;top:424.375px;width:39px;background:#fc9866;color:#fff">86</div>
<div class="hc" style="left:641px;top:424.375px;width:30px;background:#fc9566;color:#fff">87</div>
<div class="hc" style="left:673px;top:424.375px;width:24px;background:#fd9167;color:#fff">88</div>
<div class="hc" style="left:699px;top:424.375px;width:36px;background:#fd8e67;color:#fff">89</div>
<div class="hc" style="left:737px;top:424.375px;width:35px;background:#fd9167;color:#fff">88</div>
<div class="hc" style="left:774px;top:424.375px;width:33px;background:#fc9c66;color:#fff">85</div>
<div class="hc" style="left:809px;top:424.375px;width:37px;background:#fbb065;color:#151515">80</div>
<div class="hc" style="left:848px;top:424.375px;width:36px;background:#fd9167;color:#fff">88</div>
<div class="hl" style="top:440.750px">6 AM</div>
<div class="hc" style="left:457px;top:440.750px;width:29px;background:#fc9866;color:#fff">86</div>
<div class="hc" style="left:488px;top:440.750px;width:34px;background:#fba664;color:#151515">83</div>
<div class="hc" style="left:524px;top:440.750px;width:38px;background:#fc9866;color:#fff">86</div>
<div class="hc" style="left:564px;top:440.750px;width:34px;background:#fd9167;color:#fff">88</div>
<div class="hc" style="left:600px;top:440.750px;width:39px;background:#fc9566;color:#fff">87</div>
<div class="hc" style="left:641px;top:440.750px;width:30px;background:#fd9167;color:#fff">88</div>
<div class="hc" style="left:673px;top:440.750px;width:24px;background:#fd8e67;color:#fff">89</div>
<div class="hc" style="left:699px;top:440.750px;width:36px;background:#fd8a67;color:#fff">90</div>
<div class="hc" style="left:737px;top:440.750px;width:35px;background:#fd9167;color:#fff">88</div>
<div class="hc" style="left:774px;top:440.750px;width:33px;background:#fc9c66;color:#fff">85</div>
<div class="hc" style="left:809px;top:440.750px;width:37px;background:#fbb666;color:#151515">79</div>
<div class="hc" style="left:848px;top:440.750px;width:36px;background:#fd9167;color:#fff">88</div>
<div class="hl" style="top:457.125px">5 AM</div>
<div class="hc" style="left:457px;top:457.125px;width:29px;background:#fc9866;color:#fff">86</div>
<div class="hc" style="left:488px;top:457.125px;width:34px;background:#fba664;color:#151515">83</div>
<div class="hc" style="left:524px;top:457.125px;width:38px;background:#fc9c66;color:#fff">85</div>
<div class="hc" style="left:564px;top:457.125px;width:34px;background:#fd9167;color:#fff">88</div>
<div class="hc" style="left:600px;top:457.125px;width:39px;background:#fc9566;color:#fff">87</div>
<div class="hc" style="left:641px;top:457.125px;width:30px;background:#fd9167;color:#fff">88</div>
<div class="hc" style="left:673px;top:457.125px;width:24px;background:#fd8a67;color:#fff">90</div>
<div class="hc" style="left:699px;top:457.125px;width:36px;background:#fd8a67;color:#fff">90</div>
<div class="hc" style="left:737px;top:457.125px;width:35px;background:#fd9167;color:#fff">88</div>
<div class="hc" style="left:774px;top:457.125px;width:33px;background:#fc9c66;color:#fff">85</div>
<div class="hc" style="left:809px;top:457.125px;width:37px;background:#fbb666;color:#151515">79</div>
<div class="hc" style="left:848px;top:457.125px;width:36px;background:#fd9167;color:#fff">88</div>
<div class="hl" style="top:473.500px">4 AM</div>
<div class="hc" style="left:457px;top:473.500px;width:29px;background:#fc9866;color:#fff">86</div>
<div class="hc" style="left:488px;top:473.500px;width:34px;background:#fba664;color:#151515">83</div>
<div class="hc" style="left:524px;top:473.500px;width:38px;background:#fc9c66;color:#fff">85</div>
<div class="hc" style="left:564px;top:473.500px;width:34px;background:#fd9167;color:#fff">88</div>
<div class="hc" style="left:600px;top:473.500px;width:39px;background:#fc9566;color:#fff">87</div>
<div class="hc" style="left:641px;top:473.500px;width:30px;background:#fd9167;color:#fff">88</div>
<div class="hc" style="left:673px;top:473.500px;width:24px;background:#fd8a67;color:#fff">90</div>
<div class="hc" style="left:699px;top:473.500px;width:36px;background:#fd8a67;color:#fff">90</div>
<div class="hc" style="left:737px;top:473.500px;width:35px;background:#fd9167;color:#fff">88</div>
<div class="hc" style="left:774px;top:473.500px;width:33px;background:#fc9c66;color:#fff">85</div>
<div class="hc" style="left:809px;top:473.500px;width:37px;background:#fbb666;color:#151515">79</div>
<div class="hc" style="left:848px;top:473.500px;width:36px;background:#fc9566;color:#fff">87</div>
<div class="hl" style="top:489.875px">3 AM</div>
<div class="hc" style="left:457px;top:489.875px;width:29px;background:#fc9866;color:#fff">86</div>
<div class="hc" style="left:488px;top:489.875px;width:34px;background:#fca165;color:#151515">84</div>
<div class="hc" style="left:524px;top:489.875px;width:38px;background:#fc9c66;color:#fff">85</div>
<div class="hc" style="left:564px;top:489.875px;width:34px;background:#fc9566;color:#fff">87</div>
<div class="hc" style="left:600px;top:489.875px;width:39px;background:#fc9866;color:#fff">86</div>
<div class="hc" style="left:641px;top:489.875px;width:30px;background:#fc9566;color:#fff">87</div>
<div class="hc" style="left:673px;top:489.875px;width:24px;background:#fd8e67;color:#fff">89</div>
<div class="hc" style="left:699px;top:489.875px;width:36px;background:#fd8a67;color:#fff">90</div>
<div class="hc" style="left:737px;top:489.875px;width:35px;background:#fc9566;color:#fff">87</div>
<div class="hc" style="left:774px;top:489.875px;width:33px;background:#fca165;color:#151515">84</div>
<div class="hc" style="left:809px;top:489.875px;width:37px;background:#fbb666;color:#151515">79</div>
<div class="hc" style="left:848px;top:489.875px;width:36px;background:#fc9566;color:#fff">87</div>
<div class="hl" style="top:506.250px">2 AM</div>
<div class="hc" style="left:457px;top:506.250px;width:29px;background:#fc9c66;color:#fff">85</div>
<div class="hc" style="left:488px;top:506.250px;width:34px;background:#fba664;color:#151515">83</div>
<div class="hc" style="left:524px;top:506.250px;width:38px;background:#fca165;color:#151515">84</div>
<div class="hc" style="left:564px;top:506.250px;width:34px;background:#fc9c66;color:#fff">85</div>
<div class="hc" style="left:600px;top:506.250px;width:39px;background:#fca165;color:#151515">84</div>
<div class="hc" style="left:641px;top:506.250px;width:30px;background:#fca165;color:#151515">84</div>
<div class="hc" style="left:673px;top:506.250px;width:24px;background:#fc9566;color:#fff">87</div>
<div class="hc" style="left:699px;top:506.250px;width:36px;background:#fd9167;color:#fff">88</div>
<div class="hc" style="left:737px;top:506.250px;width:35px;background:#fc9c66;color:#fff">85</div>
<div class="hc" style="left:774px;top:506.250px;width:33px;background:#fca165;color:#151515">84</div>
<div class="hc" style="left:809px;top:506.250px;width:37px;background:#fbbc66;color:#151515">78</div>
<div class="hc" style="left:848px;top:506.250px;width:36px;background:#fc9866;color:#fff">86</div>
<div class="hl" style="top:522.625px">1 AM</div>
<div class="hc" style="left:457px;top:522.625px;width:29px;background:#fba664;color:#151515">83</div>
<div class="hc" style="left:488px;top:522.625px;width:34px;background:#fbb065;color:#151515">80</div>
<div class="hc" style="left:524px;top:522.625px;width:38px;background:#fbae64;color:#151515">81</div>
<div class="hc" style="left:564px;top:522.625px;width:34px;background:#fca165;color:#151515">84</div>
<div class="hc" style="left:600px;top:522.625px;width:39px;background:#fbae64;color:#151515">81</div>
<div class="hc" style="left:641px;top:522.625px;width:30px;background:#fbab63;color:#151515">82</div>
<div class="hc" style="left:673px;top:522.625px;width:24px;background:#fc9c66;color:#fff">85</div>
<div class="hc" style="left:699px;top:522.625px;width:36px;background:#fc9866;color:#fff">86</div>
<div class="hc" style="left:737px;top:522.625px;width:35px;background:#fba664;color:#151515">83</div>
<div class="hc" style="left:774px;top:522.625px;width:33px;background:#fbab63;color:#151515">82</div>
<div class="hc" style="left:809px;top:522.625px;width:37px;background:#fbc166;color:#151515">76</div>
<div class="hc" style="left:848px;top:522.625px;width:36px;background:#fca165;color:#151515">84</div>
<div class="t" style="left:464.30px;top:544.50px;font-size:10.87px;color:#333;transform:scaleX(0.7761);transform-origin:0 0;">Jan</div>
<div class="t" style="left:497.40px;top:544.50px;font-size:10.87px;color:#333;transform:scaleX(0.8329);transform-origin:0 0;">Feb</div>
<div class="t" style="left:534.50px;top:544.50px;font-size:10.87px;color:#333;transform:scaleX(0.9456);transform-origin:0 0;">Mar</div>
<div class="t" style="left:572.70px;top:544.50px;font-size:10.87px;color:#333;transform:scaleX(0.9282);transform-origin:0 0;">Apr</div>
<div class="t" style="left:609.70px;top:544.50px;font-size:10.87px;color:#333;transform:scaleX(0.9156);transform-origin:0 0;">May</div>
<div class="t" style="left:648.50px;top:544.50px;font-size:10.87px;color:#333;transform:scaleX(0.8275);transform-origin:0 0;">Jun</div>
<div class="t" style="left:679.70px;top:544.50px;font-size:10.87px;color:#333;transform:scaleX(0.7774);transform-origin:0 0;">Jul</div>
<div class="t" style="left:708.80px;top:544.50px;font-size:10.87px;color:#333;transform:scaleX(0.8895);transform-origin:0 0;">Aug</div>
<div class="t" style="left:746.40px;top:544.50px;font-size:10.87px;color:#333;transform:scaleX(0.8636);transform-origin:0 0;">Sep</div>
<div class="t" style="left:783.00px;top:544.50px;font-size:10.87px;color:#333;transform:scaleX(0.9046);transform-origin:0 0;">Oct</div>
<div class="t" style="left:819.00px;top:544.50px;font-size:10.87px;color:#333;transform:scaleX(0.9313);transform-origin:0 0;">Nov</div>
<div class="t" style="left:858.30px;top:544.50px;font-size:10.87px;color:#333;transform:scaleX(0.8641);transform-origin:0 0;">Dec</div>
<svg style="left:397px;top:577px" width="8" height="11" viewBox="0 0 8 11"><path d="M4 10.5C1.5 7 .5 5.5.5 4a3.5 3.5 0 0 1 7 0c0 1.5-1 3-3.5 6.5z" fill="#333"/><circle cx="4" cy="4" r="1.3" fill="#fff"/></svg>
<div class="t" style="left:411.50px;top:575.87px;font-size:13.97px;font-weight:bold;color:#333;transform:scaleX(0.8538);transform-origin:0 0;">Location</div>
<svg style="left:467px;top:578px" width="9" height="9" viewBox="0 0 9 9"><circle cx="4.5" cy="4.5" r="4.3" fill="#2d4556"/><path d="M3.1 3.5a1.4 1.4 0 1 1 1.9 1.3c-.4.2-.5.4-.5.8" fill="none" stroke="#fff" stroke-width="1"/><circle cx="4.5" cy="7" r=".6" fill="#fff"/></svg>
<div class="t" style="left:395.10px;top:595.31px;font-size:13.45px;color:#444;transform:scaleX(0.9386);transform-origin:0 0;">San.Francisco-</div>
<div class="t" style="left:394.80px;top:613.91px;font-size:13.45px;color:#444;transform:scaleX(0.9440);transform-origin:0 0;">Treasure.Island, CA, USA</div>
<svg style="left:552.5px;top:576.5px" width="11" height="11" viewBox="0 0 11 11"><circle cx="5.5" cy="5.5" r="4.8" fill="none" stroke="#333" stroke-width="1.1"/><path d="M2 2.6L4 1.1 7.3 1 6.4 2.6 4.2 4.2 5 5.4H7.6L8.3 7 7 9.6 5.6 10.2 5.3 7.6 3.4 6.4 1.2 5z" fill="#333"/></svg>
<div class="t" style="left:568.40px;top:575.87px;font-size:13.97px;font-weight:bold;color:#333;transform:scaleX(0.8785);transform-origin:0 0;">Coordinates</div>
<svg style="left:647px;top:578px" width="9" height="9" viewBox="0 0 9 9"><circle cx="4.5" cy="4.5" r="4.3" fill="#2d4556"/><path d="M3.1 3.5a1.4 1.4 0 1 1 1.9 1.3c-.4.2-.5.4-.5.8" fill="none" stroke="#fff" stroke-width="1"/><circle cx="4.5" cy="7" r=".6" fill="#fff"/></svg>
<div class="t" style="left:551.60px;top:595.31px;font-size:13.45px;color:#444;transform:scaleX(0.9704);transform-origin:0 0;">37.83° N / 122.37° W</div>
<svg style="left:710px;top:577px" width="9" height="11" viewBox="0 0 9 11"><path d="M.7.7h4.8l2.8 2.8v6.8H.7z" fill="none" stroke="#333" stroke-width="1.2"/><path d="M2.3 5.5h4M2.3 7.5h4" stroke="#333" stroke-width="1"/></svg>
<div class="t" style="left:724.40px;top:575.87px;font-size:13.97px;font-weight:bold;color:#333;transform:scaleX(0.9008);transform-origin:0 0;">Weather File</div>
<svg style="left:805px;top:578px" width="9" height="9" viewBox="0 0 9 9"><circle cx="4.5" cy="4.5" r="4.3" fill="#2d4556"/><path d="M3.1 3.5a1.4 1.4 0 1 1 1.9 1.3c-.4.2-.5.4-.5.8" fill="none" stroke="#fff" stroke-width="1"/><circle cx="4.5" cy="7" r=".6" fill="#fff"/></svg>
<div class="t" style="left:709.20px;top:595.31px;font-size:13.45px;color:#444;transform:scaleX(0.9015);transform-origin:0 0;">USA_CA_San.Francisco-</div>
<div class="t" style="left:709.20px;top:613.91px;font-size:13.45px;color:#444;transform:scaleX(0.9600);transform-origin:0 0;">Treasure.Island.724943_TMYx</div>
<div style="position:absolute;left:229px;top:895px;width:24px;height:24px;background:#2f4858;border-radius:3px"></div>
<svg style="left:237px;top:902px" width="9" height="9" viewBox="0 0 9 9"><path d="M4.5 1L1 4.5 4.5 8M1.3 4.5H8.5" fill="none" stroke="#fff" stroke-width="1.8"/></svg>
<div class="card" style="left:912px;top:64px;width:335px;height:427px"><div class="chead" style="background:#f9f9f9"></div></div>
<div class="t" style="left:932.00px;top:77.07px;font-size:13.97px;font-weight:bold;color:#333;transform:scaleX(0.8643);transform-origin:0 0;">EnergyPlus Simulation</div>
<svg style="left:1188px;top:76px" width="13" height="15" viewBox="0 0 13 15"><path d="M4.3 1.2h3.6v5.8h3L6.1 11.6 1.3 7h3z" fill="none" stroke="#1e3444" stroke-width="1.2" stroke-linejoin="miter"/><path d="M1.2 13.6h10.6" stroke="#1e3444" stroke-width="1.4"/></svg>
<svg style="left:1214px;top:76px" width="18" height="16" viewBox="0 0 18 16"><path d="M1.8 1v13.9h15.2" fill="none" stroke="#1e3444" stroke-width="1.5"/><path d="M2.4 13.4L7.2 5.6l5.2 3 4.2-6.6" fill="none" stroke="#1e3444" stroke-width="1.2"/></svg>
<div style="position:absolute;left:912px;top:102px;width:335px;height:42px;background:#fff;box-shadow:0 1px 2px rgba(0,0,0,0.08)"></div>
<svg style="left:926px;top:115px" width="17" height="14" viewBox="0 0 17 14"><path d="M.6 .6h7.4v3.1h8.4v9.7H.6z" fill="#243c4d"/><g fill="#fff"><rect x="2" y="2" width="1.4" height="1.4"/><rect x="5" y="2" width="1.4" height="1.4"/><rect x="2" y="5" width="1.4" height="1.4"/><rect x="5" y="5" width="1.4" height="1.4"/><rect x="2" y="8" width="1.4" height="1.4"/><rect x="5" y="8" width="1.4" height="1.4"/><rect x="2" y="11" width="1.4" height="1.4"/><rect x="5" y="11" width="1.4" height="1.4"/><rect x="8.6" y="5" width="6.6" height="7.2"/></g><g fill="#243c4d"><rect x="10" y="6.5" width="1.3" height="1.3"/><rect x="10" y="9.3" width="1.3" height="1.3"/><rect x="12.3" y="6.5" width="1.3" height="1.3"/><rect x="12.3" y="9.3" width="1.3" height="1.3"/></g></svg>
<svg style="left:947px;top:121px" width="8" height="6" viewBox="0 0 8 6"><path d="M.8 5L4 1.5 7.2 5" fill="none" stroke="#243c4d" stroke-width="1.2"/></svg>
<div class="t" style="left:963.00px;top:116.17px;font-size:13.97px;font-weight:bold;color:#243c4d;transform:scaleX(0.8624);transform-origin:0 0;">ASHRAE 90.1 Simulation</div>
<div class="t" style="left:925.50px;top:158.62px;font-size:26.91px;font-weight:bold;color:#333;transform:scaleX(0.9376);transform-origin:0 0;">0.36</div>
<svg style="left:982.7px;top:164.8px" width="11.5" height="11.5" viewBox="0 0 12 12"><circle cx="6" cy="6" r="6" fill="#16be5a"/><path d="M3.2 6.2l1.9 1.8 3.7-3.7" fill="none" stroke="#fff" stroke-width="1.5"/></svg>
<svg style="left:928px;top:190px" width="7" height="10" viewBox="0 0 7 10"><path d="M5.8 2.3C5.4 1.6 4.6 1.3 3.5 1.3 2.2 1.3 1.3 2 1.3 2.9c0 2 4.5 1.3 4.5 3.7 0 1-1 1.8-2.3 1.8-1.1 0-2-.4-2.4-1.2M3.5 0v1.3M3.5 8.4V10" fill="none" stroke="#333" stroke-width="1.2"/></svg>
<div class="t" style="left:941.90px;top:187.81px;font-size:13.45px;color:#333;transform:scaleX(0.9788);transform-origin:0 0;">Performance Cost</div>
<div class="t" style="left:925.70px;top:208.11px;font-size:13.45px;color:#333;transform:scaleX(0.9575);transform-origin:0 0;">Index</div>
<div class="t" style="left:926.40px;top:234.22px;font-size:26.91px;font-weight:bold;color:#333;transform:scaleX(0.9439);transform-origin:0 0;">139.50</div>
<div class="t" style="left:1011.50px;top:243.38px;font-size:9.83px;color:#b5b5b5;transform:scaleX(0.9813);transform-origin:0 0;">Hrs</div>
<svg style="left:1033.9px;top:242px" width="11" height="11" viewBox="0 0 12 12"><circle cx="6" cy="6" r="6" fill="#16be5a"/><path d="M3.2 6.2l1.9 1.8 3.7-3.7" fill="none" stroke="#fff" stroke-width="1.5"/></svg>
<svg style="left:926.8px;top:268px" width="10" height="9" viewBox="0 0 10 9"><path d="M2 1a1.2 1.2 0 0 1 2.4 0v4.2a2.3 2.3 0 1 1-2.4 0z" fill="#333"/><path d="M7.3 .6v4.6" stroke="#333" stroke-width="1.4"/><circle cx="7.3" cy="6.9" r=".8" fill="#333"/></svg>
<div class="t" style="left:941.70px;top:264.91px;font-size:13.45px;color:#333;transform:scaleX(0.9891);transform-origin:0 0;">Unmet Hours -</div>
<div class="t" style="left:925.70px;top:283.91px;font-size:13.45px;color:#333;transform:scaleX(0.9656);transform-origin:0 0;">Proposed</div>
<div class="t" style="left:925.60px;top:310.52px;font-size:26.91px;font-weight:bold;color:#333;transform:scaleX(0.9300);transform-origin:0 0;">0.75</div>
<div class="t" style="left:982.40px;top:320.38px;font-size:9.83px;color:#b5b5b5;transform:scaleX(0.9682);transform-origin:0 0;">Hrs</div>
<svg style="left:1005px;top:318.8px" width="11.3" height="11.3" viewBox="0 0 12 12"><circle cx="6" cy="6" r="6" fill="#16be5a"/><path d="M3.2 6.2l1.9 1.8 3.7-3.7" fill="none" stroke="#fff" stroke-width="1.5"/></svg>
<svg style="left:926.8px;top:345px" width="10" height="9" viewBox="0 0 10 9"><path d="M2 1a1.2 1.2 0 0 1 2.4 0v4.2a2.3 2.3 0 1 1-2.4 0z" fill="#333"/><path d="M7.3 .6v4.6" stroke="#333" stroke-width="1.4"/><circle cx="7.3" cy="6.9" r=".8" fill="#333"/></svg>
<div class="t" style="left:941.70px;top:342.71px;font-size:13.45px;color:#333;transform:scaleX(0.9891);transform-origin:0 0;">Unmet Hours -</div>
<div class="t" style="left:925.70px;top:361.11px;font-size:13.45px;color:#333;transform:scaleX(0.9517);transform-origin:0 0;">Baseline</div>
<svg style="left:1092px;top:166.4px" width="8" height="7" viewBox="0 0 8 7"><path d="M.5 3.6l2.3 2.3L7.5 1" fill="none" stroke="#bbb" stroke-width="1"/></svg>
<svg style="left:1225px;top:165.9px" width="7" height="7" viewBox="0 0 7 7"><path d="M.5 .5l6 6M6.5 .5l-6 6" stroke="#aaa" stroke-width="1"/></svg>
<div style="position:absolute;left:1095px;top:182.65px;width:134px;height:3.5px;border-radius:2px;background:#777"></div>
<div style="position:absolute;left:1095px;top:182.65px;width:35.700000000000045px;height:3.5px;border-radius:2px 0 0 2px;background:#16be5a"></div>
<div style="position:absolute;left:1127.2px;top:180.9px;width:7px;height:7px;border-radius:50%;background:#16be5a"></div>
<div style="position:absolute;left:1113.3px;top:178.9px;width:11px;height:11px;border-radius:50%;background:#16be5a;box-shadow:1px 1px 2px rgba(0,0,0,0.35)"></div>
<div style="position:absolute;left:1103.2px;top:150.9px;width:30.0px;height:20px;border-radius:3px;background:#16be5a"></div>
<svg style="left:1114.8px;top:170.4px" width="8" height="4" viewBox="0 0 8 4"><path d="M0 0h8L4 4z" fill="#16be5a"/></svg>
<div class="t" style="left:1108.20px;top:155.96px;font-size:11.38px;color:#fff;transform:scaleX(0.9257);transform-origin:0 0;">0.36</div>
<div class="t" style="left:1103.20px;top:196.46px;font-size:11.38px;color:#555;transform:scaleX(0.9892);transform-origin:0 0;">0.53 (max)</div>
<svg style="left:1092px;top:243.3px" width="8" height="7" viewBox="0 0 8 7"><path d="M.5 3.6l2.3 2.3L7.5 1" fill="none" stroke="#bbb" stroke-width="1"/></svg>
<svg style="left:1225px;top:242.8px" width="7" height="7" viewBox="0 0 7 7"><path d="M.5 .5l6 6M6.5 .5l-6 6" stroke="#aaa" stroke-width="1"/></svg>
<div style="position:absolute;left:1095px;top:259.55px;width:134px;height:3.5px;border-radius:2px;background:#777"></div>
<div style="position:absolute;left:1095px;top:259.55px;width:67px;height:3.5px;border-radius:2px 0 0 2px;background:#16be5a"></div>
<div style="position:absolute;left:1158.5px;top:257.8px;width:7px;height:7px;border-radius:50%;background:#16be5a"></div>
<div style="position:absolute;left:1120.2px;top:255.8px;width:11px;height:11px;border-radius:50%;background:#16be5a;box-shadow:1px 1px 2px rgba(0,0,0,0.35)"></div>
<div style="position:absolute;left:1104px;top:227.8px;width:43px;height:20px;border-radius:3px;background:#16be5a"></div>
<svg style="left:1121.7px;top:247.3px" width="8" height="4" viewBox="0 0 8 4"><path d="M0 0h8L4 4z" fill="#16be5a"/></svg>
<div class="t" style="left:1109.00px;top:232.86px;font-size:11.38px;color:#fff;transform:scaleX(0.9623);transform-origin:0 0;">139.50</div>
<div class="t" style="left:1128.60px;top:273.36px;font-size:11.38px;color:#555;transform:scaleX(0.9933);transform-origin:0 0;">300.00 (max)</div>
<svg style="left:1225px;top:320.1px" width="7" height="7" viewBox="0 0 7 7"><path d="M.5 .5l6 6M6.5 .5l-6 6" stroke="#aaa" stroke-width="1"/></svg>
<div style="position:absolute;left:1095px;top:336.85px;width:134px;height:3.5px;border-radius:2px;background:#777"></div>
<div style="position:absolute;left:1095px;top:336.85px;width:66.79999999999995px;height:3.5px;border-radius:2px 0 0 2px;background:#16be5a"></div>
<div style="position:absolute;left:1158.3px;top:335.1px;width:7px;height:7px;border-radius:50%;background:#16be5a"></div>
<div style="position:absolute;left:1089.1px;top:333.1px;width:11px;height:11px;border-radius:50%;background:#16be5a;box-shadow:1px 1px 2px rgba(0,0,0,0.35)"></div>
<div style="position:absolute;left:1079px;top:305.1px;width:31px;height:20px;border-radius:3px;background:#16be5a"></div>
<svg style="left:1090.6px;top:324.6px" width="8" height="4" viewBox="0 0 8 4"><path d="M0 0h8L4 4z" fill="#16be5a"/></svg>
<div class="t" style="left:1084.00px;top:310.16px;font-size:11.38px;color:#fff;transform:scaleX(0.9709);transform-origin:0 0;">0.75</div>
<div class="t" style="left:1128.60px;top:350.66px;font-size:11.38px;color:#555;transform:scaleX(0.9933);transform-origin:0 0;">300.00 (max)</div>
<div style="position:absolute;left:925px;top:387px;width:309px;height:24px;border-radius:3px;background:#2f4858"></div>
<svg style="left:1038.2px;top:394.5px" width="8" height="8" viewBox="0 0 8 8"><circle cx="3.2" cy="3.2" r="2.3" fill="none" stroke="#fff" stroke-width="1.4"/><path d="M4.9 4.9L7.5 7.5" stroke="#fff" stroke-width="1.6"/></svg>
<div class="t" style="left:1051.90px;top:394.18px;font-size:9.83px;font-weight:bold;color:#fff;transform:scaleX(0.9534);transform-origin:0 0;">View Summary</div>
<div style="position:absolute;left:925px;top:421px;width:309px;height:24px;border-radius:3px;background:#2f4858"></div>
<svg style="left:1038.7px;top:428.5px" width="8" height="8" viewBox="0 0 8 8"><circle cx="3.2" cy="3.2" r="2.3" fill="none" stroke="#fff" stroke-width="1.4"/><path d="M4.9 4.9L7.5 7.5" stroke="#fff" stroke-width="1.6"/></svg>
<div class="t" style="left:1051.60px;top:428.18px;font-size:9.83px;font-weight:bold;color:#fff;transform:scaleX(0.9476);transform-origin:0 0;">View Proposed</div>
<div style="position:absolute;left:925px;top:454px;width:309px;height:24px;border-radius:3px;background:#2f4858"></div>
<svg style="left:1041px;top:461.5px" width="8" height="8" viewBox="0 0 8 8"><circle cx="3.2" cy="3.2" r="2.3" fill="none" stroke="#fff" stroke-width="1.4"/><path d="M4.9 4.9L7.5 7.5" stroke="#fff" stroke-width="1.6"/></svg>
<div class="t" style="left:1054.30px;top:461.18px;font-size:9.83px;font-weight:bold;color:#fff;transform:scaleX(0.9436);transform-origin:0 0;">View Baseline</div>
</body></html>
